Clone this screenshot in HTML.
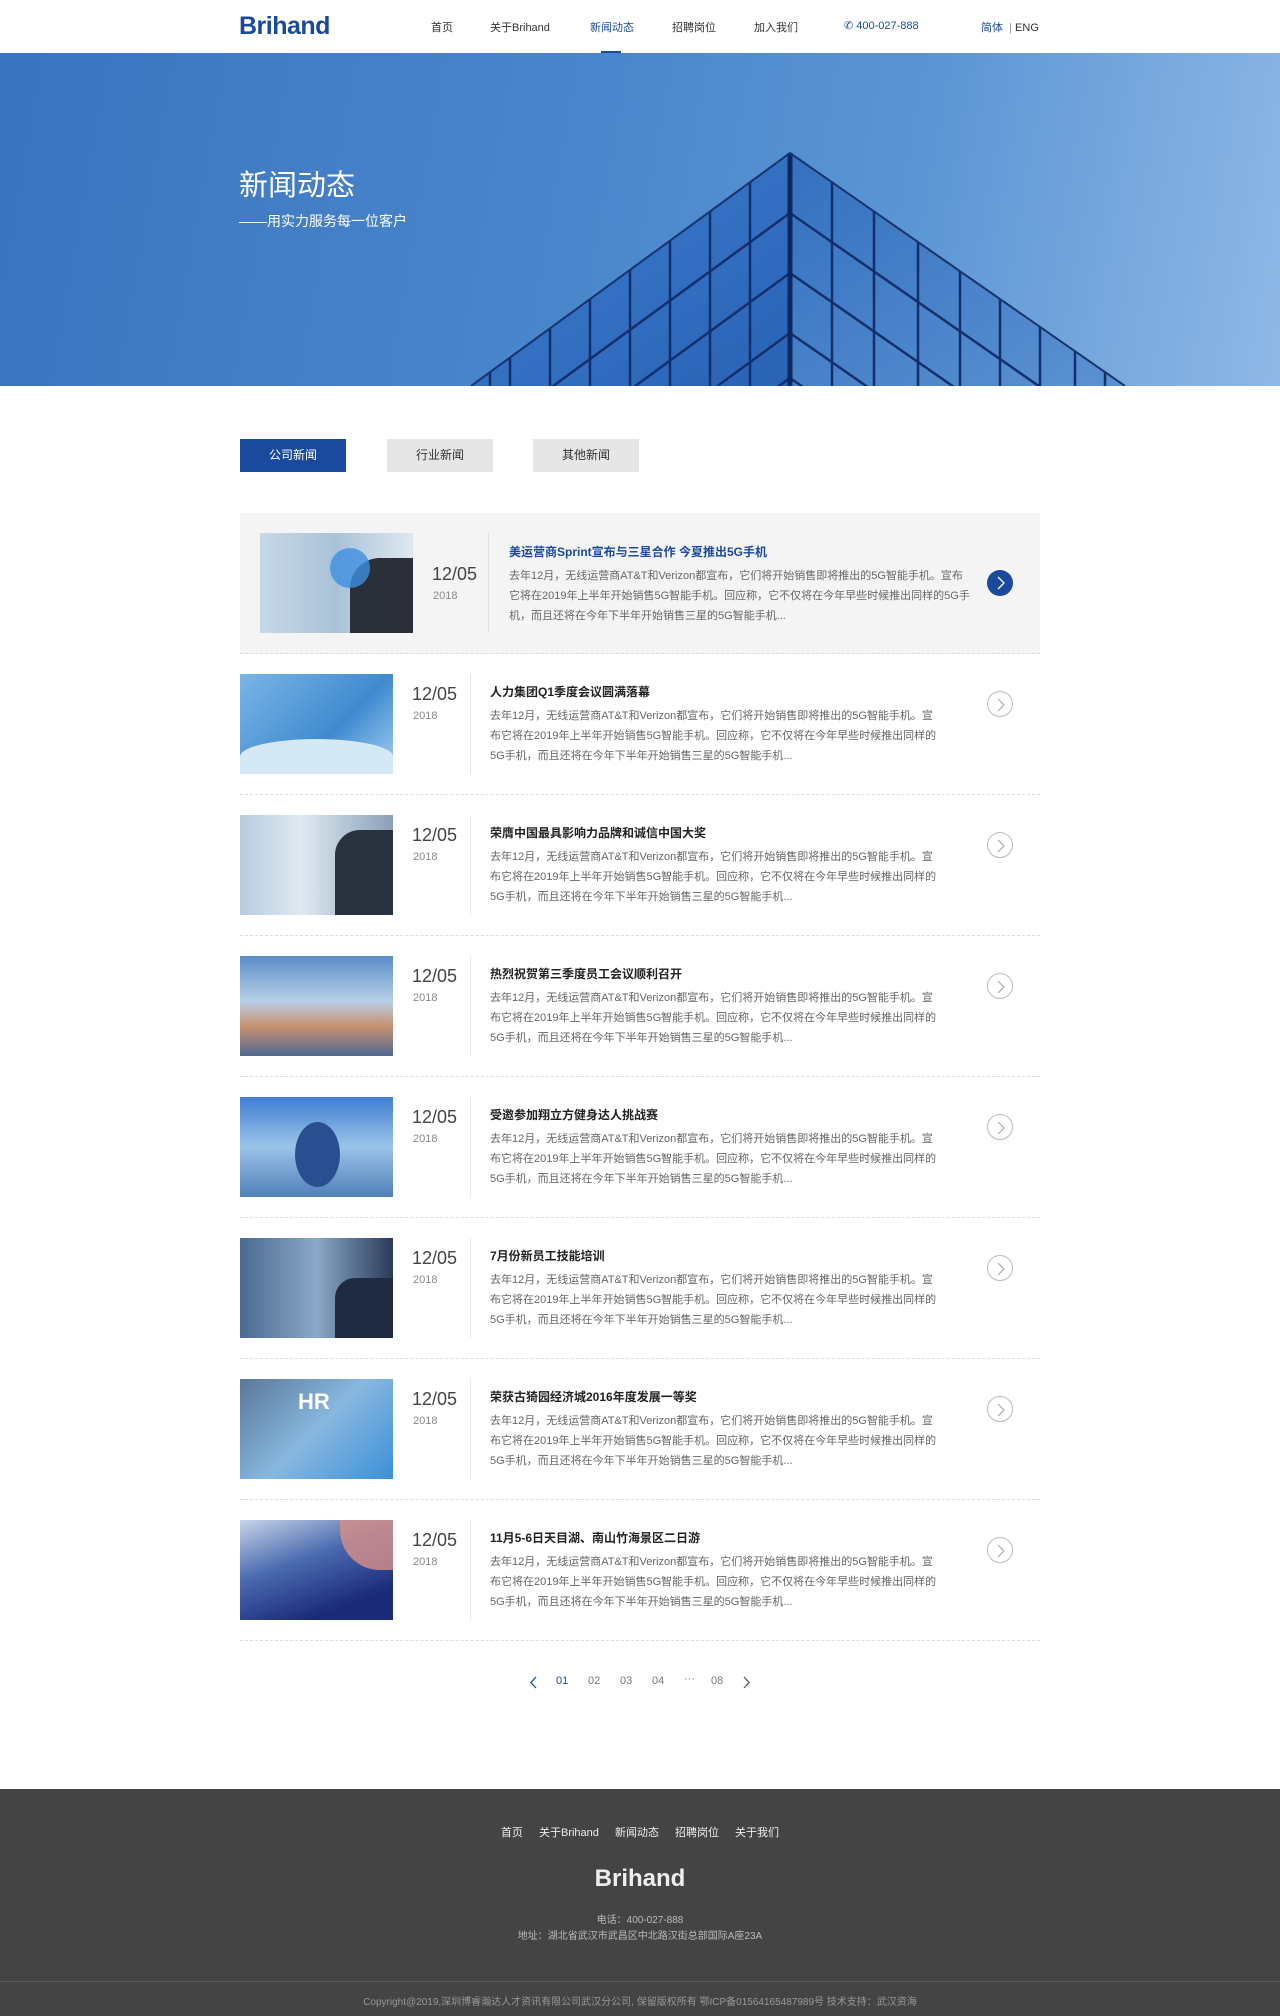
<!DOCTYPE html>
<html><head><meta charset="utf-8"><style>
*{margin:0;padding:0;box-sizing:border-box}
body{width:1280px;height:2016px;position:relative;background:#fff;font-family:"Liberation Sans","Noto Sans CJK SC",sans-serif;overflow:hidden}
.a{position:absolute;white-space:nowrap}
.nav{font-size:11px;color:#333;top:19px}
.tab{position:absolute;top:439px;width:106px;height:33px;line-height:33px;text-align:center;font-size:12px;background:#e6e6e6;color:#333}
.item{position:absolute;left:240px;width:800px;height:141px;border-bottom:1px dashed #ddd}
.img{position:absolute;left:0;top:20px;width:153px;height:100px;overflow:hidden}
.date{position:absolute;left:172px;top:30px;font-size:18px;color:#444}
.year{position:absolute;left:173px;top:56px;font-size:11px;color:#888}
.div{position:absolute;left:230px;top:20px;width:1px;height:100px;background:#e5e5e5}
.tt{position:absolute;left:250px;top:29px;font-size:12px;color:#222;font-weight:bold}
.tx{position:absolute;left:250px;top:52px;width:452px;font-size:11px;line-height:20px;color:#666;white-space:normal}
.cir{position:absolute;left:747px;top:37px;width:26px;height:26px;border-radius:50%;border:1px solid #bbb}
.cir svg{position:absolute;left:8px;top:6px}
</style></head><body>
<!-- header -->
<div class="a" style="left:239px;top:12px;font-size:25px;font-weight:bold;color:#1a4a9e;letter-spacing:-0.5px">Brihand</div>
<div class="a nav" style="left:431px">首页</div>
<div class="a nav" style="left:490px">关于Brihand</div>
<div class="a nav" style="left:590px;color:#1a4a9e">新闻动态</div>
<div style="position:absolute;left:601px;top:51px;width:20px;height:2px;background:#1a4a9e"></div>
<div class="a nav" style="left:672px">招聘岗位</div>
<div class="a nav" style="left:754px">加入我们</div>
<div class="a nav" style="left:844px;color:#1a4a9e">✆ 400-027-888</div>
<div class="a nav" style="left:981px;color:#1a4a9e">简体 <span style="color:#999">&nbsp;|&nbsp;</span><span style="color:#333">ENG</span></div>
<!-- hero -->
<div style="position:absolute;left:0;top:53px;width:1280px;height:333px;overflow:hidden;background:linear-gradient(100deg,#3a74bf 0%,#4a86cc 45%,#5b95d4 70%,#8fb8e6 100%)">
<svg width="1280" height="333" style="position:absolute;left:0;top:0">
<defs><clipPath id="L"><polygon points="790,100 471,333 790,333"/></clipPath><clipPath id="R"><polygon points="790,100 1125,333 790,333"/></clipPath>
<linearGradient id="gl" x1="0" y1="0" x2="1" y2="1"><stop offset="0" stop-color="#3f7ed0"/><stop offset="1" stop-color="#2a62b4"/></linearGradient>
<linearGradient id="gr" x1="0" y1="0" x2="1" y2="1"><stop offset="0" stop-color="#3470c0"/><stop offset="1" stop-color="#5b92d2"/></linearGradient></defs>
<polygon points="790,100 471,333 790,333" fill="url(#gl)"/>
<polygon points="790,100 1125,333 790,333" fill="url(#gr)"/>
<g clip-path="url(#L)" stroke="#132f6e" stroke-width="2.5">
<line x1="750" y1="0" x2="750" y2="333"/><line x1="710" y1="0" x2="710" y2="333"/><line x1="670" y1="0" x2="670" y2="333"/><line x1="630" y1="0" x2="630" y2="333"/><line x1="590" y1="0" x2="590" y2="333"/><line x1="550" y1="0" x2="550" y2="333"/><line x1="510" y1="0" x2="510" y2="333"/><line x1="490" y1="0" x2="490" y2="333"/>
<line x1="790" y1="160" x2="471" y2="393"/><line x1="790" y1="220" x2="471" y2="453"/><line x1="790" y1="280" x2="471" y2="513"/><line x1="790" y1="325" x2="471" y2="558"/>
</g>
<g clip-path="url(#R)" stroke="#132f6e" stroke-width="2.5">
<line x1="832" y1="0" x2="832" y2="333"/><line x1="874" y1="0" x2="874" y2="333"/><line x1="918" y1="0" x2="918" y2="333"/><line x1="960" y1="0" x2="960" y2="333"/><line x1="1000" y1="0" x2="1000" y2="333"/><line x1="1040" y1="0" x2="1040" y2="333"/><line x1="1075" y1="0" x2="1075" y2="333"/><line x1="1105" y1="0" x2="1105" y2="333"/>
<line x1="790" y1="160" x2="1125" y2="393"/><line x1="790" y1="220" x2="1125" y2="453"/><line x1="790" y1="280" x2="1125" y2="513"/><line x1="790" y1="325" x2="1125" y2="558"/>
</g>
<line x1="790" y1="100" x2="790" y2="333" stroke="#0f2760" stroke-width="5"/>
<polyline points="471,333 790,100 1125,333" fill="none" stroke="#16346f" stroke-width="2"/>
</svg>
<div class="a" style="left:239px;top:109px;font-size:29px;color:#fff">新闻动态</div>
<div class="a" style="left:239px;top:158px;font-size:14px;color:#fff">——用实力服务每一位客户</div>
</div>
<!-- tabs -->
<div class="tab" style="left:240px;background:#1a4a9e;color:#fff">公司新闻</div>
<div class="tab" style="left:387px">行业新闻</div>
<div class="tab" style="left:533px">其他新闻</div>
<!-- featured -->
<div style="position:absolute;left:240px;top:513px;width:800px;height:141px;background:#f4f4f4;border-bottom:1px dashed #ddd">
<div style="position:absolute;left:20px;top:20px;width:153px;height:100px;background:linear-gradient(90deg,#c8d8e6,#a9c2d8 50%,#dfe8f0)"><div style="position:absolute;left:90px;top:25px;width:63px;height:75px;background:#2a2f3a;border-radius:30px 0 0 0"></div><div style="position:absolute;left:70px;top:15px;width:40px;height:40px;border-radius:50%;background:#3f8fe0;opacity:.8"></div></div>
<div class="a" style="left:192px;top:51px;font-size:18px;color:#444">12/05</div>
<div class="a" style="left:193px;top:77px;font-size:11px;color:#888">2018</div>
<div style="position:absolute;left:248px;top:20px;width:1px;height:100px;background:#e0e0e0"></div>
<div class="a" style="left:269px;top:30px;font-size:12px;color:#1a4a9e;font-weight:bold">美运营商Sprint宣布与三星合作 今夏推出5G手机</div>
<div class="a" style="left:269px;top:53px;width:462px;font-size:11px;line-height:20px;color:#666;white-space:normal">去年12月，无线运营商AT&amp;T和Verizon都宣布，它们将开始销售即将推出的5G智能手机。宣布它将在2019年上半年开始销售5G智能手机。回应称，它不仅将在今年早些时候推出同样的5G手机，而且还将在今年下半年开始销售三星的5G智能手机...</div>
<div style="position:absolute;left:747px;top:57px;width:26px;height:26px;border-radius:50%;background:#1a4a9e"><svg width="10" height="14" style="position:absolute;left:9px;top:6px"><polyline points="2,1 8,7 2,13" fill="none" stroke="#fff" stroke-width="1.3"/></svg></div>
</div>
<!-- items -->
<div class="item" style="top:654px"><div class="img" style="background:linear-gradient(135deg,#7ab6e6,#3f8ad0 60%,#a6d0f0)"><div style="position:absolute;left:0;top:65px;width:153px;height:35px;background:#d4e8f6;border-radius:50% 50% 0 0"></div></div><div class="date">12/05</div><div class="year">2018</div><div class="div"></div><div class="tt">人力集团Q1季度会议圆满落幕</div><div class="tx">去年12月，无线运营商AT&amp;T和Verizon都宣布，它们将开始销售即将推出的5G智能手机。宣布它将在2019年上半年开始销售5G智能手机。回应称，它不仅将在今年早些时候推出同样的5G手机，而且还将在今年下半年开始销售三星的5G智能手机...</div><div class="cir"><svg width="10" height="14"><polyline points="2,1 8,7 2,13" fill="none" stroke="#aaa" stroke-width="1.2"/></svg></div></div>
<div class="item" style="top:795px"><div class="img" style="background:linear-gradient(90deg,#b8cbe0,#dfe9f2 40%,#8aa0b8)"><div style="position:absolute;left:95px;top:15px;width:58px;height:85px;background:#2a3240;border-radius:25px 0 0 0"></div></div><div class="date">12/05</div><div class="year">2018</div><div class="div"></div><div class="tt">荣膺中国最具影响力品牌和诚信中国大奖</div><div class="tx">去年12月，无线运营商AT&amp;T和Verizon都宣布，它们将开始销售即将推出的5G智能手机。宣布它将在2019年上半年开始销售5G智能手机。回应称，它不仅将在今年早些时候推出同样的5G手机，而且还将在今年下半年开始销售三星的5G智能手机...</div><div class="cir"><svg width="10" height="14"><polyline points="2,1 8,7 2,13" fill="none" stroke="#aaa" stroke-width="1.2"/></svg></div></div>
<div class="item" style="top:936px"><div class="img" style="background:linear-gradient(180deg,#5a8cc8,#b8d0e8 45%,#c89070 70%,#506890)"></div><div class="date">12/05</div><div class="year">2018</div><div class="div"></div><div class="tt">热烈祝贺第三季度员工会议顺利召开</div><div class="tx">去年12月，无线运营商AT&amp;T和Verizon都宣布，它们将开始销售即将推出的5G智能手机。宣布它将在2019年上半年开始销售5G智能手机。回应称，它不仅将在今年早些时候推出同样的5G手机，而且还将在今年下半年开始销售三星的5G智能手机...</div><div class="cir"><svg width="10" height="14"><polyline points="2,1 8,7 2,13" fill="none" stroke="#aaa" stroke-width="1.2"/></svg></div></div>
<div class="item" style="top:1077px"><div class="img" style="background:linear-gradient(180deg,#3f7ed0,#9cc4ea 50%,#4f7fb8)"><div style="position:absolute;left:55px;top:25px;width:45px;height:65px;background:#2a4f90;border-radius:50%"></div></div><div class="date">12/05</div><div class="year">2018</div><div class="div"></div><div class="tt">受邀参加翔立方健身达人挑战赛</div><div class="tx">去年12月，无线运营商AT&amp;T和Verizon都宣布，它们将开始销售即将推出的5G智能手机。宣布它将在2019年上半年开始销售5G智能手机。回应称，它不仅将在今年早些时候推出同样的5G手机，而且还将在今年下半年开始销售三星的5G智能手机...</div><div class="cir"><svg width="10" height="14"><polyline points="2,1 8,7 2,13" fill="none" stroke="#aaa" stroke-width="1.2"/></svg></div></div>
<div class="item" style="top:1218px"><div class="img" style="background:linear-gradient(90deg,#4a6a90,#8aa8c8 50%,#2a3a58)"><div style="position:absolute;left:95px;top:40px;width:58px;height:60px;background:#1f2a40;border-radius:20px 0 0 0"></div></div><div class="date">12/05</div><div class="year">2018</div><div class="div"></div><div class="tt">7月份新员工技能培训</div><div class="tx">去年12月，无线运营商AT&amp;T和Verizon都宣布，它们将开始销售即将推出的5G智能手机。宣布它将在2019年上半年开始销售5G智能手机。回应称，它不仅将在今年早些时候推出同样的5G手机，而且还将在今年下半年开始销售三星的5G智能手机...</div><div class="cir"><svg width="10" height="14"><polyline points="2,1 8,7 2,13" fill="none" stroke="#aaa" stroke-width="1.2"/></svg></div></div>
<div class="item" style="top:1359px"><div class="img" style="background:linear-gradient(135deg,#5a7898,#88b8e0 50%,#3a90d8)"><div class="a" style="left:58px;top:10px;font-size:22px;font-weight:bold;color:#fff">HR</div></div><div class="date">12/05</div><div class="year">2018</div><div class="div"></div><div class="tt">荣获古猗园经济城2016年度发展一等奖</div><div class="tx">去年12月，无线运营商AT&amp;T和Verizon都宣布，它们将开始销售即将推出的5G智能手机。宣布它将在2019年上半年开始销售5G智能手机。回应称，它不仅将在今年早些时候推出同样的5G手机，而且还将在今年下半年开始销售三星的5G智能手机...</div><div class="cir"><svg width="10" height="14"><polyline points="2,1 8,7 2,13" fill="none" stroke="#aaa" stroke-width="1.2"/></svg></div></div>
<div class="item" style="top:1500px"><div class="img" style="background:linear-gradient(160deg,#c8d4e8,#4a6ab0 40%,#1a2a78 80%)"><div style="position:absolute;left:100px;top:0;width:53px;height:50px;background:#d89088;border-radius:0 0 0 40px;opacity:.8"></div></div><div class="date">12/05</div><div class="year">2018</div><div class="div"></div><div class="tt">11月5-6日天目湖、南山竹海景区二日游</div><div class="tx">去年12月，无线运营商AT&amp;T和Verizon都宣布，它们将开始销售即将推出的5G智能手机。宣布它将在2019年上半年开始销售5G智能手机。回应称，它不仅将在今年早些时候推出同样的5G手机，而且还将在今年下半年开始销售三星的5G智能手机...</div><div class="cir"><svg width="10" height="14"><polyline points="2,1 8,7 2,13" fill="none" stroke="#aaa" stroke-width="1.2"/></svg></div></div>
<!-- pagination -->
<svg class="a" style="left:529px;top:1676px" width="8" height="13"><polyline points="7,1 2,6.5 7,12" fill="none" stroke="#1a4a9e" stroke-width="1.3"/></svg>
<div class="a" style="left:556px;top:1675px;font-size:11px;color:#1a4a9e">01</div>
<div class="a" style="left:588px;top:1675px;font-size:11px;color:#777">02</div>
<div class="a" style="left:620px;top:1675px;font-size:11px;color:#777">03</div>
<div class="a" style="left:652px;top:1675px;font-size:11px;color:#777">04</div>
<div class="a" style="left:684px;top:1673px;font-size:11px;color:#777">···</div>
<div class="a" style="left:711px;top:1675px;font-size:11px;color:#777">08</div>
<svg class="a" style="left:743px;top:1676px" width="8" height="13"><polyline points="1,1 6,6.5 1,12" fill="none" stroke="#555" stroke-width="1.3"/></svg>
<!-- footer -->
<div style="position:absolute;left:0;top:1789px;width:1280px;height:227px;background:#444">
<div class="a" style="left:0;width:1280px;text-align:center;top:35px;font-size:11px;color:#eee;word-spacing:13px">首页 关于Brihand 新闻动态 招聘岗位 关于我们</div>
<div class="a" style="left:0;width:1280px;text-align:center;top:76px;font-size:24px;font-weight:bold;color:#eee">Brihand</div>
<div class="a" style="left:0;width:1280px;text-align:center;top:122px;font-size:10px;color:#bbb">电话：400-027-888</div>
<div class="a" style="left:0;width:1280px;text-align:center;top:138px;font-size:10px;color:#bbb">地址：湖北省武汉市武昌区中北路汉街总部国际A座23A</div>
<div style="position:absolute;left:0;top:192px;width:1280px;height:1px;background:#5a5a5a"></div>
<div class="a" style="left:0;width:1280px;text-align:center;top:204px;font-size:10px;color:#999">Copyright@2019,深圳博睿瀚达人才资讯有限公司武汉分公司, 保留版权所有 鄂ICP备01564165487989号 技术支持：武汉资海</div>
</div>
</body></html>
